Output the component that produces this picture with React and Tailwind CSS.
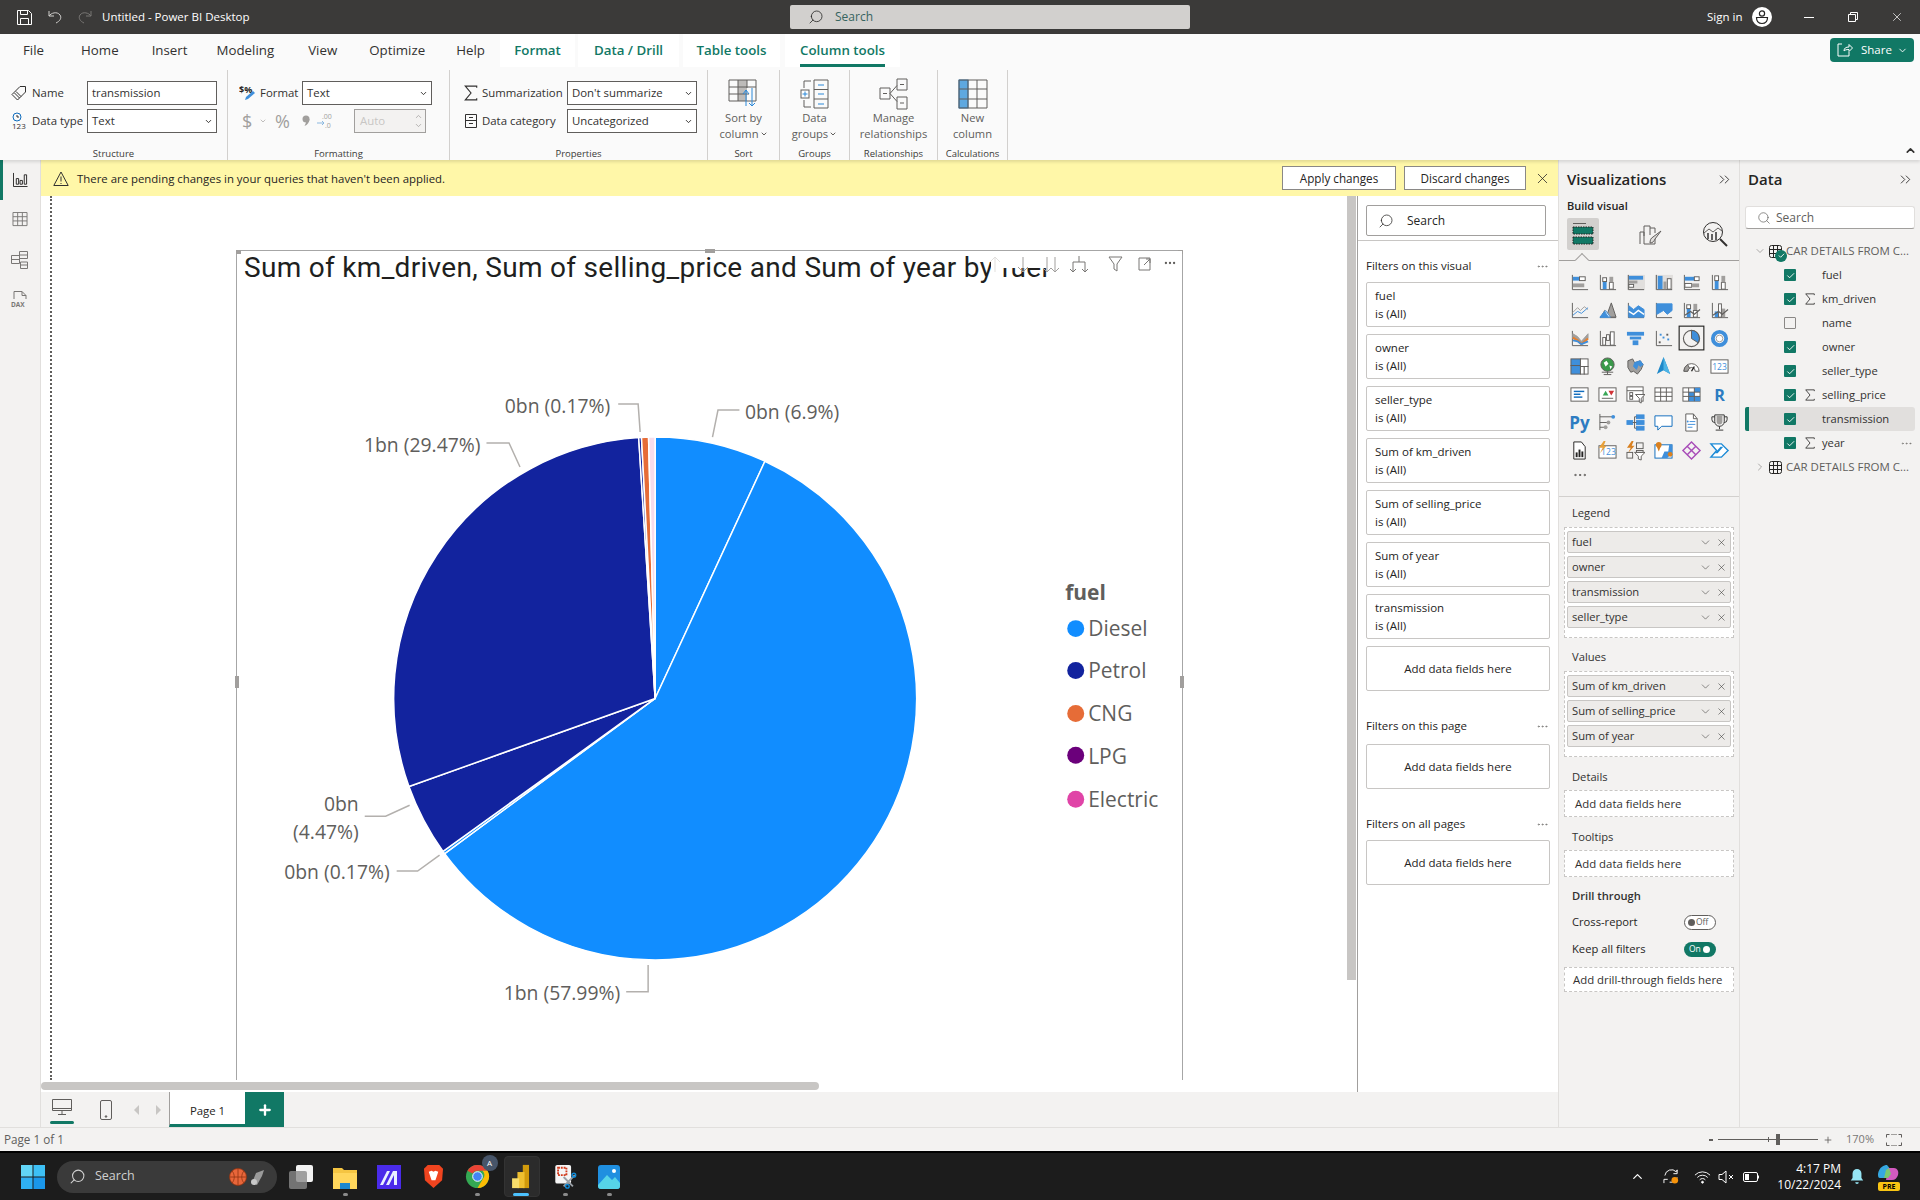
import React from "react";
import { Search, X, ChevronDown, ChevronRight, ChevronUp, ChevronsRight, Plus, MoreHorizontal } from "lucide-react";

const B = "#3f8fdb";
const G = "#a19f9d";
const D = "#605e5c";

const R = ({ x, y, w, h, f = "none", s }) => <rect x={x} y={y} width={w} height={h} fill={f} stroke={s} />;
const P = ({ d, f = "none", s = D, w = 1 }) => <path d={d} fill={f} stroke={s} strokeWidth={w} />;

const Axes = () => <P d="M2.5 2v15.5H19" />;

// visualization pane icons, row by row
const vizIcons = [
  <><Axes /><R x={3} y={4} w={7} h={4} f={B} /><R x={3} y={11} w={12} h={4} f={G} /><R x={10} y={4} w={6} h={4} f="#fff" s={D} /></>,
  <><Axes /><R x={5} y={9} w={4} h={8} f={B} /><R x={5} y={5} w={4} h={4} f="#fff" s={D} /><R x={12} y={10} w={4} h={7} f="#fff" s={D} /><R x={12} y={4} w={4} h={6} f={G} /></>,
  <><R x={1} y={2} w={19} h={16} f="#e1dfdd" /><Axes /><R x={3} y={3} w={15} h={4} f={B} /><R x={3} y={8} w={9} h={3} f={G} /><R x={3} y={12} w={5} h={3} f="#fff" s={D} /></>,
  <><R x={1} y={2} w={19} h={16} f="#e1dfdd" /><Axes /><R x={4} y={3} w={5} h={14} f={B} /><R x={10} y={9} w={3} h={8} f={G} /><R x={14} y={6} w={4} h={11} f="#fff" s={D} /></>,
  <><Axes /><R x={3} y={4} w={10} h={4} f={B} /><R x={13} y={4} w={5} h={4} f="#fff" s={D} /><R x={3} y={11} w={7} h={4} f="#fff" s={D} /><R x={10} y={11} w={8} h={4} f={G} /></>,
  <><Axes /><R x={5} y={8} w={4} h={9} f={B} /><R x={5} y={3} w={4} h={5} f="#fff" s={D} /><R x={12} y={10} w={4} h={7} f="#fff" s={D} /><R x={12} y={3} w={4} h={7} f={G} /></>,

  <><Axes /><P d="M3 12l5-5 3 3 4-4 4 3" s={G} /><P d="M3 15l5-4 4 2 7-6" s={B} /></>,
  <><P d="M2 17.5h17" /><P d="M3 17l4-7 3 3 4-11 5 15z" f={G} s={D} /><P d="M3 17l5-7 5 7z" f="#fff" s={B} /><P d="M2 17l5-6 4 6z" f={B} s={B} /></>,
  <><Axes /><P d="M3 5l5 4 5-4 6 4v8H3z" f={B} s={B} /><P d="M3 11l5 3 5-4 6 4" s="#fff" w={1.5} /></>,
  <><Axes /><P d="M3 3h16v7l-5 4-4-4-7 4z" f={B} s={B} /></>,
  <><Axes /><R x={5} y={8} w={4} h={9} f={B} /><R x={5} y={4} w={4} h={4} f="#fff" s={D} /><R x={12} y={3} w={4} h={7} f={G} /><R x={12} y={10} w={4} h={7} f="#fff" s={D} /><P d="M3 15l6-4 4 3 6-5" w={1.2} /></>,
  <><Axes /><R x={5} y={11} w={4} h={6} f={B} /><R x={12} y={8} w={4} h={9} f={G} /><R x={9} y={3} w={3} h={14} f="#fff" s={D} /><P d="M3 15l6-4 4 3 6-5" w={1.2} /></>,

  <><Axes /><P d="M3 5l5 3 4 5 7-8v5l-7 6-4-4-5-2z" f={G} s={G} /><P d="M3 9l5 3 4 4 7-6" s="#e97f2b" w={2.2} /><P d="M3 12l5 1 4 3 7-3" s={B} w={2} /></>,
  <><Axes /><R x={5} y={9} w={3} h={8} s={D} f="#fff" /><R x={9} y={6} w={3} h={6} s={D} f="#fff" /><R x={13} y={3} w={4} h={14} s={D} f="#fff" /></>,
  <><R x={1} y={3} w={18} h={4} f={B} /><R x={4} y={8} w={12} h={3} f={B} /><R x={7} y={12} w={6} h={5} f={B} /></>,
  <><Axes /><R x={5} y={13} w={2} h={2} f={D} /><R x={9} y={8} w={2} h={2} f={B} /><R x={13} y={5} w={2} h={2} f={D} /><R x={14} y={10} w={2} h={2} f={B} /><R x={6} y={5} w={2} h={2} f={B} /></>,
  <><rect x={-3} y={-3} width={26} height={25} fill="none" stroke="#252423" strokeWidth={1.2} /><circle cx={10} cy={10} r={8.5} fill="none" stroke={D} strokeWidth={1.2} /><P d="M10 10V1.5a8.5 8.5 0 0 1 7 13z" f={B} s={D} /></>,
  <><circle cx={10} cy={10} r={7} fill="none" stroke={B} strokeWidth={4} /><circle cx={10} cy={10} r={3.5} fill="#fff" stroke={G} /></>,

  <><R x={1} y={2} w={10} h={7} f={B} s={D} /><R x={1} y={9} w={10} h={9} f={B} s={D} /><R x={11} y={2} w={8} h={8} f="#fff" s={D} /><R x={11} y={10} w={4} h={8} f="#fff" s={D} /><R x={15} y={10} w={4} h={8} f="#fff" s={D} /></>,
  <><circle cx={10} cy={8} r={7} fill="#3a9a4a" stroke={D} /><P d="M6 6l3-2 2 3-3 3zM12 9l3 1-2 3z" f="#fff" s="none" /><P d="M4 16h12M10 15v3M6 18.5h8" /></>,
  <><P d="M2 4l5-2 2 4 6-2 3 4-2 5-4 5-4-3-3 1-3-5z" f={G} s={D} /><P d="M9 6l6-2 3 4-3 2-2-2-2 5-3-3z" f={B} s={B} /></>,
  <><P d="M10 0L3 18l7-4 7 4z" f="#1e88c9" s="none" /><P d="M10 0v14l7 4z" f="#4db4e6" s="none" /></>,
  <><P d="M2 15a8 8 0 0 1 16 0h-4a4 4 0 0 0-8 0z" f="#fff" s={D} /><P d="M2 15a8 8 0 0 1 4-7l2 4a4 4 0 0 0-2 3z" f={G} s={D} /><P d="M10 15l3-5" s="#252423" w={1.5} /></>,
  <><R x={1} y={3} w={18} h={14} f="#fff" s={D} /><text x={10} y={14} textAnchor="middle" fontSize="9" fontFamily="Open Sans" fill={B}>123</text></>,

  <><R x={1} y={3} w={18} h={14} f="#fff" s={D} /><R x={4} y={6} w={11} h={1.5} f="#0f6cbd" /><R x={4} y={9} w={7} h={1.5} f="#0f6cbd" /><R x={4} y={12} w={9} h={1.5} f="#0f6cbd" /></>,
  <><R x={1} y={3} w={18} h={14} f="#fff" s={D} /><P d="M5 11l3-5 3 5z" f="#3aa657" s="none" /><P d="M11 6h6l-3 5z" f="#d13438" s="none" /><P d="M4 14h12" /></>,
  <><R x={1} y={2} w={17} h={15} f="#fff" s={D} /><P d="M1 6h17" /><R x={4} y={8} w={3} h={3} s={D} /><R x={4} y={12} w={3} h={3} s={D} /><P d="M10 10h10l-4 4v5l-2-1v-4z" f="#fff" /></>,
  <><R x={1} y={3} w={18} h={14} f="#fff" s={D} /><P d="M1 7.5h18M1 12h18M7 3v14M13 3v14" /></>,
  <><R x={1} y={3} w={18} h={14} f="#fff" s={D} /><R x={7} y={7.5} w={6} h={4.5} f={B} /><R x={13} y={3} w={6} h={4.5} f={B} /><R x={7} y={12} w={6} h={5} f={B} /><R x={13} y={12} w={6} h={5} f={B} /><P d="M1 7.5h18M1 12h18M7 3v14M13 3v14" /></>,
  <text x={10} y={17} textAnchor="middle" fontSize="17" fontWeight="700" fontFamily="Open Sans" fill="#2d7cc1">R</text>,

  <text x={10} y={17} textAnchor="middle" fontSize="18" fontWeight="700" fontFamily="Open Sans" fill="#2d7cc1">Py</text>,
  <><P d="M2 1v17M2 4h13M2 10h8M2 15h5" /><circle cx={16} cy={4} r={2} fill={B} /><circle cx={11} cy={10} r={2} fill={G} /><circle cx={8} cy={15} r={2} fill={G} /></>,
  <><R x={1} y={8} w={6} h={4} f={B} s={B} /><R x={11} y={2} w={8} h={4} f={B} s={B} /><R x={11} y={8} w={8} h={4} f={B} s={B} /><R x={11} y={14} w={8} h={4} f={B} s={B} /><P d="M7 10h4M9 4v12M9 4h2M9 16h2" /></>,
  <P d="M1 3h18v11H8l-4 4v-4H1z" f="#fff" s="#0f6cbd" />,
  <><P d="M4 1h8l4 5v13H4z" f="#fff" /><P d="M12 1v5h4" /><circle cx={6} cy={9} r={1} fill={B} /><P d="M8 9h6M6 12h8M6 15h5" s={B} /></>,
  <><P d="M5 2h10v7a5 5 0 0 1-10 0zM5 4H2v3a3 3 0 0 0 3 3M15 4h3v3a3 3 0 0 1-3 3M10 14v3M6 18h8" s="#323130" /><P d="M7 3h6v6a3 3 0 0 1-6 0z" f={G} s="none" /></>,

  <><P d="M4 1h8l4 5v13H4z" f="#fff" s="#252423" /><R x={6} y={12} w={2} h={5} f="#252423" /><R x={9} y={9} w={2} h={8} f="#252423" /><R x={12} y={11} w={2} h={6} f="#252423" /></>,
  <><R x={1} y={5} w={18} h={13} f="#fff" s={D} /><text x={11} y={15} textAnchor="middle" fontSize="9" fontFamily="Open Sans" fill={B}>123</text><P d="M6 0L1 7h4l-3 6 7-8H6l2-5z" f="#e8a13a" s="none" /></>,
  <><P d="M6 0L1 7h4l-3 6 7-8H6l2-5z" f="#d9801f" s="none" /><R x={11} y={2} w={7} h={6} s={D} /><R x={1} y={12} w={6} h={6} s={D} /><R x={11} y={10} w={7} h={2} s={D} /><P d="M9 12h11l-4 4v4l-3-1v-3z" f="#fff" /></>,
  <><R x={1} y={4} w={18} h={14} f="#fff" s="#0f6cbd" /><P d="M8 18l3-7h4l1-7h3v9l-5 5z" f={B} s="none" /><circle cx={5} cy={4} r={3} fill="#d9801f" /><P d="M3 6l2 5 2-5z" f="#d9801f" s="none" /><circle cx={17} cy={14} r={2.5} fill="#d9801f" /></>,
  <P d="M10 1l9 9-9 9-9-9zM6 6l8 8M14 6l-8 8" s="#a84cb8" w={1.5} />,
  <><P d="M1 3h11l7 7-7 7H1l6-7z" f="#fff" s="#1c8ad6" w={1.5} /><P d="M5 13l6-7h3l-6 7z" f="#1c8ad6" s="none" /></>,
];

function Sigma({ className = "w-3 h-3" }) {
  return (
    <svg viewBox="0 0 14 14" className={className}>
      <path d="M12 2.5V1H2l5 6-5 6h10v-1.5" fill="none" stroke="#323130" strokeWidth="1" />
    </svg>
  );
}

function Select({ value, width }) {
  return (
    <div className={`flex items-center justify-between h-[24px] bg-white border border-[#605e5c] pl-[4px] pr-[3px] text-[11.4px] ${width}`}>
      <span>{value}</span>
      <ChevronDown size={9} strokeWidth={2.5} className="text-[#323130]" />
    </div>
  );
}

function Group({ width, label, children }) {
  return (
    <div className={`mt-[3px] h-[90px] border-r border-[#d2d0ce] flex flex-col ${width}`}>
      <div className="h-[77px]">{children}</div>
      <div className="h-[13px] leading-[13px] text-[9.5px] text-center text-[#3b3a39]">{label}</div>
    </div>
  );
}

function BigButton({ icon, lines, chevron }) {
  return (
    <div className="flex flex-col items-center pt-[8px] text-[11.2px] leading-[16px] text-[#605e5c]">
      <div className="h-[32px] flex items-start justify-center">{icon}</div>
      <div className="whitespace-nowrap">{lines[0]}</div>
      <div className="whitespace-nowrap flex items-center gap-[1px]">
        {lines[1]}
        {chevron && <ChevronDown size={8} strokeWidth={3} />}
      </div>
    </div>
  );
}

function TitleBar() {
  return (
    <div className="h-[34px] bg-[#3b3a39] flex items-center text-white text-[11.5px]">
      <svg viewBox="0 0 15 15" className="w-[15px] h-[15px] ml-[17px]" fill="none" stroke="#fff">
        <path d="M.5.5h11l3 3v11H.5zM3.5.5v4h7v-4M3.5 14.5v-6h8v6" />
      </svg>
      <svg viewBox="0 0 14 14" className="w-[14px] h-[14px] ml-[16px]" fill="none" stroke="#d2d0ce">
        <path d="M1 1v5h5M1 6c2-3 8-5 11-1 2 3 0 6-4 8" />
      </svg>
      <svg viewBox="0 0 14 14" className="w-[14px] h-[14px] ml-[16px]" fill="none" stroke="#797775">
        <path d="M13 1v5H8M13 6C11 3 5 1 2 5c-2 3 0 6 4 8" />
      </svg>
      <span className="ml-[10px] w-[688px] whitespace-nowrap">Untitled - Power BI Desktop</span>
      <div className="w-[400px] h-[24px] bg-[#d2d0ce] rounded-[2px] flex items-center pl-[18px] text-[#37645f] text-[12px]">
        <Search size={16} strokeWidth={1.2} className="text-[#252423] -scale-x-100" />
        <span className="ml-[11px]">Search</span>
      </div>
      <span className="ml-[517px]">Sign in</span>
      <div className="ml-[10px] w-[20px] h-[20px] rounded-full bg-white flex items-center justify-center">
        <svg viewBox="0 0 16 16" className="w-[16px] h-[16px]" fill="none" stroke="#252423" strokeWidth="1.2">
          <circle cx="8" cy="4.5" r="2.6" />
          <path d="M2.5 8.5h11c0 4-2.5 6-5.5 6s-5.500-2-5.500-6z" />
        </svg>
      </div>
      <div className="ml-[32px] w-[10px] h-[1px] bg-white" />
      <svg viewBox="0 0 10 10" className="ml-[34px] w-[10px] h-[10px]" fill="none" stroke="#fff">
        <path d="M.5 2.500h7v7h-7zM2.500 2.500v-2h7v7h-2" />
      </svg>
      <X size={14} strokeWidth={1.2} className="ml-[32px]" />
    </div>
  );
}

const menuItems = [
  ["File", "ml-[23px]"],
  ["Home", "ml-[37px]"],
  ["Insert", "ml-[33px]"],
  ["Modeling", "ml-[29px]"],
  ["View", "ml-[34px]"],
  ["Optimize", "ml-[32px]"],
  ["Help", "ml-[31px]"],
];

function Ribbon() {
  return (
    <div className="h-[126px] bg-[#fafafa] flex flex-col shadow-[0_2px_3px_rgba(0,0,0,0.12)] relative z-10 text-[#323130]">
      <div className="h-[33px] flex items-stretch text-[13.3px]">
        <div className="w-[500px] flex items-stretch whitespace-nowrap">
          {menuItems.map(([t, m]) => (
            <div key={t} className={`${m} flex items-center`}>{t}</div>
          ))}
        </div>
        <div className="w-[75px] bg-white flex items-center justify-center font-semibold text-[#117865]">Format</div>
        <div className="ml-[3px] w-[101px] bg-white flex items-center justify-center font-semibold text-[#117865]">Data / Drill</div>
        <div className="ml-[4px] w-[97px] bg-white flex items-center justify-center font-semibold text-[#117865]">Table tools</div>
        <div className="ml-[5px] w-[115px] bg-white flex items-center justify-center font-semibold text-[#117865] relative">
          Column tools
          <div className="absolute left-[15px] right-[15px] bottom-0 h-[3px] bg-[#117865]" />
        </div>
        <div className="ml-auto mr-[6px] mt-[4px] w-[84px] h-[24px] bg-[#117865] rounded-[4px] text-white flex items-center text-[11.5px] pl-[7px]">
          <svg viewBox="0 0 16 14" className="w-[16px] h-[14px]" fill="none" stroke="#fff">
            <path d="M5 1H1v12h11V9M7 8c0-3 2-4 5-4V1.500L15.500 5 12 8.500V6.500C9 6.500 8 7 7 8z" />
          </svg>
          <span className="ml-[8px]">Share</span>
          <ChevronDown size={11} className="ml-[5px]" />
        </div>
      </div>
      <div className="flex items-start flex-1 text-[11.4px]">
        <Group width="w-[228px]" label="Structure">
          <div className="pt-[11px] pl-[11px] flex flex-col gap-[4px]">
            <div className="flex items-center h-[24px]">
              <svg viewBox="0 0 16 16" className="w-[16px] h-[16px]" fill="none" stroke="#323130">
                <path d="M9 1.500h5.500V7l-8 8L1 9.500zM3.500 8l5 5M5 6.500l5 5" />
              </svg>
              <span className="ml-[5px] w-[55px]">Name</span>
              <div className="w-[130px] h-[24px] bg-white border border-[#605e5c] pl-[4px] leading-[22px]">transmission</div>
            </div>
            <div className="flex items-center h-[24px]">
              <svg viewBox="0 0 16 18" className="w-[16px] h-[18px] overflow-visible">
                <circle cx="6" cy="5" r="4" fill="none" stroke="#0f6cbd" />
                <path d="M6 3v2h2" fill="none" stroke="#323130" />
                <text x="1" y="16.500" fontSize="8" fontFamily="Open Sans" fill="#323130">123</text>
              </svg>
              <span className="ml-[5px] w-[55px] whitespace-nowrap">Data type</span>
              <Select value="Text" width="w-[130px]" />
            </div>
          </div>
        </Group>
        <Group width="w-[222px]" label="Formatting">
          <div className="pt-[11px] flex flex-col gap-[4px]">
            <div className="flex items-center h-[24px] pl-[11px]">
              <svg viewBox="0 0 18 18" className="w-[18px] h-[18px]">
                <text x="0" y="9" fontSize="9" fontWeight="700" fontFamily="Open Sans" fill="#252423">$%</text>
                <path d="M6 16l1-3 7-6 2 2-7 6z" fill="#3f8fdb" />
              </svg>
              <span className="ml-[3px] w-[42px]">Format</span>
              <Select value="Text" width="w-[130px]" />
            </div>
            <div className="flex items-center h-[24px] pl-[14px] text-[#a19f9d] relative">
              <span className="text-[18px] w-[14px]">$</span>
              <ChevronDown size={8} strokeWidth={2} className="ml-[3px]" />
              <span className="text-[18px] ml-[8px] w-[18px]">%</span>
              <svg viewBox="0 0 8 12" className="w-[8px] h-[12px] ml-[9px]">
                <circle cx="4" cy="4" r="3.500" fill="#a19f9d" />
                <path d="M7.500 4c0 3-2 6-5 7 1-2 2-4 1.500-6z" fill="#a19f9d" />
              </svg>
              <svg viewBox="0 0 18 18" className="w-[18px] h-[18px] ml-[6px]" fill="none" stroke="#a19f9d">
                <text x="6" y="7" fontSize="7" fontFamily="Open Sans" fill="#a19f9d" stroke="none">.00</text>
                <text x="9" y="16" fontSize="7" fontFamily="Open Sans" fill="#a19f9d" stroke="none">.0</text>
                <path d="M1 11h7M6 9l2 2-2 2" stroke="#8bb8e0" />
              </svg>
              <div className="ml-[20px] w-[72px] h-[24px] bg-[#f3f2f1] border border-[#a19f9d] pl-[5px] leading-[22px] flex items-center justify-between pr-[2px] text-[#c8c6c4]">
                <span>Auto</span>
                <div className="flex flex-col text-[#a19f9d]">
                  <ChevronUp size={9} />
                  <ChevronDown size={9} />
                </div>
              </div>
            </div>
          </div>
        </Group>
        <Group width="w-[258px]" label="Properties">
          <div className="pt-[11px] pl-[13px] flex flex-col gap-[4px]">
            <div className="flex items-center h-[24px]">
              <Sigma className="w-[16px] h-[16px]" />
              <span className="ml-[3px] w-[85px] whitespace-nowrap">Summarization</span>
              <Select value="Don't summarize" width="w-[130px]" />
            </div>
            <div className="flex items-center h-[24px]">
              <svg viewBox="0 0 16 16" className="w-[16px] h-[16px]" fill="none" stroke="#323130">
                <path d="M2.500 1.500h11v13h-11zM2.500 7.500h11M6 4.500h4M6 10.500h4" />
              </svg>
              <span className="ml-[3px] w-[85px] whitespace-nowrap">Data category</span>
              <Select value="Uncategorized" width="w-[130px]" />
            </div>
          </div>
        </Group>
        <Group width="w-[72px]" label="Sort">
          <BigButton
            lines={["Sort by", "column"]}
            chevron
            icon={
              <svg viewBox="0 0 32 32" className="w-[32px] h-[32px]" fill="none" stroke="#605e5c">
                <rect x="10" y="2" width="9" height="21" fill="#bdbbb9" stroke="none" />
                <path d="M1 2h27v21H1zM1 9h27M1 16h20M10 2v21M19 2v8" />
                <path d="M18 12v16M15 16l3-4 3 4M24 10v18M21 25l3 3 3-3" stroke="#2b88d8" />
              </svg>
            }
          />
        </Group>
        <Group width="w-[70px]" label="Groups">
          <BigButton
            lines={["Data", "groups"]}
            chevron
            icon={
              <svg viewBox="0 0 30 32" className="w-[30px] h-[32px]" fill="none" stroke="#605e5c">
                <path d="M11 3H4v7M4 22v7h7M14 2h14v28H14zM14 11.500h14M14 21h14" />
                <path d="M18 7h6M18 16h6M18 26h6" stroke="#2b88d8" />
                <rect x="1" y="12" width="8" height="8" fill="#fff" />
                <path d="M5 13.500v5M2.500 16h5" stroke="#2b88d8" />
              </svg>
            }
          />
        </Group>
        <Group width="w-[88px]" label="Relationships">
          <BigButton
            lines={["Manage", "relationships"]}
            icon={
              <svg viewBox="0 0 30 32" className="w-[30px] h-[32px]" fill="none" stroke="#605e5c">
                <path d="M1 10h10v11H1zM18 1h10v11H18zM18 19h10v12H18zM4 15.500h4M21 6.500h4M21 25h4M11 15.500l7-8M11 15.500l7 8" />
              </svg>
            }
          />
        </Group>
        <Group width="w-[70px]" label="Calculations">
          <BigButton
            lines={["New", "column"]}
            icon={
              <svg viewBox="0 0 30 32" className="w-[30px] h-[32px]" fill="none" stroke="#605e5c">
                <rect x="1" y="2" width="9" height="28" fill="#5ea8e0" stroke="#2b78b8" />
                <path d="M1 2h28v28H1zM1 11h28M1 21h28M10 2v28M19 2v28" />
              </svg>
            }
          />
        </Group>
      </div>
      <ChevronUp size={13} strokeWidth={3} className="absolute right-[3px] bottom-[3px] text-[#323130]" />
    </div>
  );
}

function LeftRail() {
  return (
    <div className="w-[41px] bg-[#f3f2f1] border-r border-[#e1dfdd] flex flex-col items-center shrink-0 relative">
      <div className="absolute left-0 top-0 w-[3px] h-[40px] bg-[#117865]" />
      <svg viewBox="0 0 16 16" className="w-[15px] h-[15px] mt-[12px]" fill="none" stroke="#252423">
        <path d="M.5 1v14.500h15M3.500 7h2.500v6H3.500zM7.500 9h2.500v4H7.500zM12 3h2.500v10H12z" />
      </svg>
      <svg viewBox="0 0 16 16" className="w-[16px] h-[15px] mt-[25px]" fill="none" stroke="#797775">
        <path d="M.5.5h15v14h-15zM.5 5h15M.5 9.500h15M5.500.5v14M10.500.5v14" />
      </svg>
      <svg viewBox="0 0 18 18" className="w-[18px] h-[18px] mt-[24px]" fill="none" stroke="#797775">
        <path d="M.5 4.500h8v8h-8zM.5 8.500h8M8.500.5h8v7h-8zM8.500 4h8M9.500 11h7v6.500h-7zM9.500 14h7" />
      </svg>
      <div className="relative w-[18px] h-[18px] mt-[22px]">
        <svg viewBox="0 0 18 18" className="w-[18px] h-[18px]" fill="none" stroke="#797775">
          <path d="M3 8V.5h8l4 4V8M11 .5v4h4" />
        </svg>
        <span className="absolute left-0 bottom-0 text-[6.500px] leading-[8px] font-bold text-[#797775]">DAX</span>
      </div>
    </div>
  );
}

// pie wedge between two fractions of a turn, clockwise from 12 o'clock
const CX = 655;
const CY = 698;
const RAD = 262;
const pt = (f) => {
  const a = f * 2 * Math.PI;
  return `${(CX + RAD * Math.sin(a)).toFixed(2)} ${(CY - RAD * Math.cos(a)).toFixed(2)}`;
};
const wedge = (a, b) => `M${CX} ${CY}L${pt(a)}A${RAD} ${RAD} 0 ${b - a > 0.5 ? 1 : 0} 1 ${pt(b)}Z`;

const slices = [
  [0, 0.069, "#118dff"],
  [0.069, 0.6489, "#118dff"],
  [0.6489, 0.6506, "#118dff"],
  [0.6506, 0.6953, "#12239e"],
  [0.6953, 0.99, "#12239e"],
  [0.99, 0.9917, "#12239e"],
  [0.9917, 0.996, "#e66c37"],
  [0.996, 1, "#f6dcec"],
];

const leaders = [
  "M712.500 436L718 409H739.500",
  "M618 403H638L640 431",
  "M486 442H508.600L519.600 466",
  "M364 816H385L409 805",
  "M396 871H417L439 855",
  "M626 992H648V965",
];

const labels = [
  [745, 418, "0bn (6.9%)", "start"],
  [610, 412, "0bn (0.17%)", "end"],
  [480, 451, "1bn (29.47%)", "end"],
  [358, 811, "0bn", "end"],
  [358, 839, "(4.47%)", "end"],
  [389, 879, "0bn (0.17%)", "end"],
  [620, 1000, "1bn (57.99%)", "end"],
];

const legend = [
  ["Diesel", "#118dff", 628, 7],
  ["Petrol", "#12239e", 670, 7],
  ["CNG", "#e66c37", 713, 8],
  ["LPG", "#6b007b", 755, 9],
  ["Electric", "#e044a7", 799, 8],
];

function Handle({ className }) {
  return <div className={`absolute bg-[#a19f9d] ${className}`} />;
}

function PieVisual() {
  return (
    <div className="ml-[195px] mt-[54px] w-[947px] h-[830px] border-x border-t border-[#a6a6a6] relative shrink-0">
      <Handle className="left-[-1px] top-[-1px] w-[5px] h-[4px]" />
      <Handle className="right-[-1px] top-[-1px] w-[5px] h-[4px]" />
      <Handle className="left-[468px] top-[-2px] w-[10px] h-[4px]" />
      <Handle className="left-[-2px] top-[425px] w-[4px] h-[12px]" />
      <Handle className="right-[-2px] top-[425px] w-[4px] h-[12px]" />
      <div className="h-[39px] pl-[7px] font-['Roboto'] text-[28px] tracking-[0.3px] leading-[33px] text-[#201f1e] whitespace-nowrap">
        Sum of km_driven, Sum of selling_price and Sum of year by fuel
      </div>
      <div className="absolute top-0 left-[754px] right-0 h-[17px] bg-white" />
      <svg viewBox="0 0 200 20" className="absolute top-[3px] left-[750px] w-[200px] h-[20px]" fill="none" stroke="#a19f9d">
        <path d="M8 18V3M3 8l5-5 5 5" stroke="#e1dfdd" />
        <path d="M36 3v15M31 13l5 5 5-5" />
        <path d="M60 3v15M56 14l4 4 4-4M68 3v15M64 14l4 4 4-4" />
        <path d="M92 2v6M86 18v-10h12v10M83 15l3 3 3-3M95 15l3 3 3-3" stroke="#797775" />
        <path d="M122 3h13l-5 7v7l-3-2v-5z" stroke="#797775" />
        <path d="M152 4h11v12h-11zM157 11l6-6M159 5h4v4" stroke="#797775" />
      </svg>
      <MoreHorizontal size={14} className="absolute top-[5px] left-[926px] text-[#605e5c]" />
      <svg viewBox="236 289 947 791" className="w-[945px] h-[790px]">
        {slices.map(([a, b, c], i) => (
          <path key={i} d={wedge(a, b)} fill={c} stroke="#fff" strokeWidth="1.5" strokeLinejoin="round" />
        ))}
        {leaders.map((d) => (
          <path key={d} d={d} fill="none" stroke="#b3b0ad" strokeWidth="1.5" />
        ))}
        {labels.map(([x, y, t, a], i) => (
          <text key={i} x={x} y={y} textAnchor={a} fontFamily="Open Sans" fontSize="19.400" fill="#605e5c">{t}</text>
        ))}
        <text x={1066} y={599} fontFamily="Open Sans" fontWeight="700" fontSize="21" fill="#605e5c">fuel</text>
        {legend.map(([t, c, y, dy]) => (
          <g key={t}>
            <circle cx={1076.500} cy={y} r={8.500} fill={c} />
            <text x={1089} y={y + dy} fontFamily="Open Sans" fontSize="21" fill="#605e5c">{t}</text>
          </g>
        ))}
      </svg>
    </div>
  );
}

function FilterCard({ name }) {
  return (
    <div className="w-[184px] h-[45px] bg-white border border-[#c8c6c4] rounded-[2px] pl-[8px] pt-[4px] leading-[18px] mb-[7px]">
      <div>{name}</div>
      <div>is (All)</div>
    </div>
  );
}

function AddFields({ className = "" }) {
  return (
    <div className={`w-[184px] h-[45px] bg-white border border-[#c8c6c4] rounded-[2px] flex items-center justify-center ${className}`}>
      Add data fields here
    </div>
  );
}

function FilterHeading({ children, className }) {
  return (
    <div className={`flex items-center justify-between w-[184px] h-[16px] ${className}`}>
      <span>{children}</span>
      <MoreHorizontal size={13} strokeWidth={1.5} className="text-[#797775] mr-[1px]" />
    </div>
  );
}

function FiltersPane() {
  return (
    <div className="w-[201px] shrink-0 bg-white border-l border-[#a19f9d] text-[11.5px] text-[#252423]">
      <div className="h-[45px] border-b border-[#c8c6c4] pl-[8px] pt-[9px]">
        <div className="w-[180px] h-[31px] border border-[#a19f9d] rounded-[2px] flex items-center pl-[11px]">
          <Search size={16} strokeWidth={1.2} className="text-[#323130] -scale-x-100" />
          <span className="ml-[13px] text-[12px]">Search</span>
        </div>
      </div>
      <div className="pl-[8px]">
        <FilterHeading className="mt-[17px] mb-[8px]">Filters on this visual</FilterHeading>
        {["fuel", "owner", "seller_type", "Sum of km_driven", "Sum of selling_price", "Sum of year", "transmission"].map((n) => (
          <FilterCard key={n} name={n} />
        ))}
        <AddFields className="mt-[2px]" />
        <FilterHeading className="mt-[27px] mb-[10px]">Filters on this page</FilterHeading>
        <AddFields />
        <FilterHeading className="mt-[27px] mb-[8px]">Filters on all pages</FilterHeading>
        <AddFields />
      </div>
    </div>
  );
}

function PageTabs() {
  return (
    <div className="h-[35px] bg-[#f3f2f1] flex items-stretch">
      <div className="w-[28px] ml-[7px] flex flex-col items-center pt-[7px] relative">
        <svg viewBox="0 0 20 16" className="w-[20px] h-[16px]" fill="none" stroke="#605e5c">
          <path d="M.5.5h19v11H.5z" fill="#f3f2f1" />
          <path d="M.5 9.500h19M10 12v3M6 15.500h8" />
        </svg>
        <div className="absolute bottom-[3px] left-[2px] w-[24px] h-[3px] rounded-full bg-[#117865]" />
      </div>
      <div className="w-[50px] ml-[8px] flex items-center">
        <svg viewBox="0 0 12 20" className="w-[12px] h-[20px] ml-[16px]" fill="none" stroke="#605e5c">
          <rect x=".5" y=".5" width="11" height="19" rx="1.500" />
          <circle cx="6" cy="16.500" r=".8" fill="#605e5c" />
        </svg>
      </div>
      <svg viewBox="0 0 6 10" className="w-[6px] h-[10px] self-center"><path d="M5 0v10L0 5z" fill="#c8c6c4" /></svg>
      <svg viewBox="0 0 6 10" className="w-[6px] h-[10px] self-center ml-[15px]"><path d="M1 0v10l5-5z" fill="#c8c6c4" /></svg>
      <div className="ml-[8px] w-[76px] bg-white border-l border-[#a19f9d] border-b-[3px] border-b-[#117865] flex items-center justify-center pt-[5px] text-[11.4px] text-[#252423]">Page 1</div>
      <div className="w-[39px] bg-[#117865] flex items-center justify-center text-white">
        <Plus size={16} strokeWidth={3.500} />
      </div>
    </div>
  );
}

function Chip({ name }) {
  return (
    <div className="h-[22px] bg-[#edebe9] border border-[#c8c6c4] rounded-[2px] flex items-center pl-[4px] pr-[3px] text-[11.2px] text-[#323130]">
      <span className="flex-1">{name}</span>
      <ChevronDown size={13} strokeWidth={1} className="text-[#323130]" />
      <X size={11} strokeWidth={1.2} className="ml-[4px] text-[#323130]" />
    </div>
  );
}

function Well({ height, chips, text = "Add data fields here", pl = "pl-[10px]" }) {
  return (
    <div className={`ml-[5px] w-[170px] bg-white border border-dashed border-[#c8c6c4] ${height} ${chips ? "pt-[3px] px-[2px] flex flex-col gap-[3px]" : `flex items-center ${pl}`}`}>
      {chips ? chips.map((c) => <Chip key={c} name={c} />) : <span className="text-[11.4px] whitespace-nowrap text-[#323130]">{text}</span>}
    </div>
  );
}

function WellLabel({ children, className }) {
  return <div className={`ml-[13px] leading-[16px] text-[11.2px] text-[#323130] ${className}`}>{children}</div>;
}

function VizPane() {
  return (
    <div className="w-[182px] shrink-0 bg-[#f3f2f1] border-l border-r border-[#e1dfdd] text-[#252423]">
      <div className="h-[38px] flex items-center justify-between pl-[8px] pr-[6px]">
        <span className="text-[15px] font-semibold">Visualizations</span>
        <ChevronsRight size={17} strokeWidth={1.200} />
      </div>
      <div className="pl-[8px] h-[16px] leading-[16px] text-[11px] font-semibold">Build visual</div>
      <div className="mt-[4px] flex items-center h-[32px] pl-[8px]">
        <div className="w-[32px] h-[32px] bg-[#d2d0ce] rounded-[2px] flex items-center justify-center">
          <svg viewBox="0 0 24 24" className="w-[24px] h-[24px]">
            <path d="M2 1.500h13" stroke="#605e5c" />
            <rect x="2" y="5" width="20" height="7" fill="#117865" stroke="#252423" strokeDasharray="1.500 1" />
            <rect x="2" y="15" width="20" height="7" fill="#117865" stroke="#252423" strokeDasharray="1.500 1" />
          </svg>
        </div>
        <svg viewBox="0 0 24 24" className="w-[24px] h-[24px] ml-[39px]" fill="none" stroke="#605e5c">
          <path d="M2 22V10h4v12h11v-7M6 14V4h6v9M12 6h5v5" />
          <path d="M12 21c3 0 4-2 5-4l6-8-8 6c-2 1-3 3-3 6z" fill="#e1dfdd" />
        </svg>
        <svg viewBox="0 0 26 26" className="w-[26px] h-[26px] ml-[40px]" fill="none" stroke="#323130">
          <circle cx="11" cy="11" r="9.500" />
          <path d="M18 18l7 7" strokeWidth="2" />
          <path d="M2 12l5-4 4 3 5-4 4 3" stroke="#605e5c" />
          <path d="M6 12v6M10 13v6M14 11v8" strokeWidth="1.500" />
        </svg>
      </div>
      <div className="mt-[10px] h-[1px] bg-[#a19f9d] relative">
        <div className="absolute left-[18px] -top-[5px] w-[10px] h-[10px] rotate-45 bg-[#f3f2f1] border-l border-t border-[#a19f9d]" />
      </div>
      <div className="ml-[6px] mt-[7px] grid grid-cols-6 w-[168px] auto-rows-[28px]">
        {vizIcons.map((icon, i) => (
          <div key={i} className="flex items-center justify-center">
            <svg viewBox="0 0 20 20" className="w-[19px] h-[19px] overflow-visible">{icon}</svg>
          </div>
        ))}
      </div>
      <div className="h-[33px] border-b border-[#d2d0ce] pl-[13px] pt-[3px] text-[#605e5c]">
        <MoreHorizontal size={16} strokeWidth={1.500} />
      </div>
      <WellLabel className="h-[30px] pt-[8px]">Legend</WellLabel>
      <Well height="h-[111px]" chips={["fuel", "owner", "transmission", "seller_type"]} />
      <WellLabel className="h-[33px] pt-[11px]">Values</WellLabel>
      <Well height="h-[86px]" chips={["Sum of km_driven", "Sum of selling_price", "Sum of year"]} />
      <WellLabel className="h-[33px] pt-[12px]">Details</WellLabel>
      <Well height="h-[27px]" />
      <WellLabel className="h-[33px] pt-[12px]">Tooltips</WellLabel>
      <Well height="h-[27px]" />
      <WellLabel className="mt-[11px] font-semibold">Drill through</WellLabel>
      <div className="mt-[10px] h-[16px] flex items-center justify-between pl-[13px] pr-[23px] text-[11.2px]">
        <span>Cross-report</span>
        <div className="w-[32px] h-[15px] rounded-full border border-[#605e5c] bg-white flex items-center pl-[3px] gap-[1px] text-[8.500px] text-[#605e5c]">
          <div className="w-[7px] h-[7px] rounded-full bg-[#605e5c]" />
          <span>Off</span>
        </div>
      </div>
      <div className="mt-[11px] h-[16px] flex items-center justify-between pl-[13px] pr-[23px] text-[11.2px]">
        <span>Keep all filters</span>
        <div className="w-[32px] h-[15px] rounded-full bg-[#117865] flex items-center pl-[5px] gap-[2px] text-[8.500px] text-white">
          <span>On</span>
          <div className="w-[7px] h-[7px] rounded-full bg-white" />
        </div>
      </div>
      <Well height="mt-[10px] h-[25px]" text="Add drill-through fields here" pl="pl-[8px]" />
    </div>
  );
}

const fields = [
  ["fuel", true, false],
  ["km_driven", true, true],
  ["name", false, false],
  ["owner", true, false],
  ["seller_type", true, false],
  ["selling_price", true, true],
  ["transmission", true, false, true],
  ["year", true, true],
];

function TableGlyph() {
  return (
    <svg viewBox="0 0 13 13" className="w-[13px] h-[13px] shrink-0" fill="none" stroke="#252423">
      <rect x=".5" y=".5" width="12" height="12" rx="2" />
      <path d="M.5 4.500h12M.5 8.500h12M4.500.5v12M8.500.5v12" />
    </svg>
  );
}

function DataPane() {
  return (
    <div className="w-[180px] shrink-0 bg-[#f3f2f1] text-[#252423]">
      <div className="h-[38px] flex items-center justify-between pl-[8px] pr-[6px]">
        <span className="text-[15px] font-semibold">Data</span>
        <ChevronsRight size={17} strokeWidth={1.200} />
      </div>
      <div className="ml-[5px] mt-[8px] w-[170px] h-[23px] bg-white border border-[#e1dfdd] border-b-[#a19f9d] rounded-[3px] flex items-center pl-[11px] text-[#605e5c] text-[12px]">
        <Search size={14} strokeWidth={1.200} />
        <span className="ml-[5px]">Search</span>
      </div>
      <div className="mt-[10px] text-[11.2px]">
        <div className="h-[24px] flex items-center pl-[14px] text-[#605e5c]">
          <ChevronDown size={12} strokeWidth={1} className="text-[#605e5c]" />
          <div className="relative ml-[3px]">
            <TableGlyph />
            <div className="absolute left-[6px] top-[5px] w-[12px] h-[12px] rounded-full bg-[#117865] flex items-center justify-center">
              <svg viewBox="0 0 8 8" className="w-[7px] h-[7px]" fill="none" stroke="#fff"><path d="M1 4l2 2 4-4" /></svg>
            </div>
          </div>
          <span className="ml-[4px] whitespace-nowrap text-[11.5px]">CAR DETAILS FROM C...</span>
        </div>
        {fields.map(([name, on, sigma, active]) => (
          <div key={name} className={`h-[24px] ml-[5px] w-[170px] flex items-center relative rounded-[3px] ${active ? "bg-[#e1dfdd]" : ""}`}>
            {active && <div className="absolute left-0 top-0 h-full w-[4px] bg-[#117865] rounded-l-[2px]" />}
            <div className={`ml-[39px] w-[12px] h-[12px] rounded-[1px] flex items-center justify-center ${on ? "bg-[#117865]" : "bg-transparent border border-[#8a8886]"}`}>
              {on && <svg viewBox="0 0 10 10" className="w-[9px] h-[9px]" fill="none" stroke="#fff"><path d="M1.500 5l2.500 2.500 5-5" /></svg>}
            </div>
            <div className="w-[12px] ml-[8px]">{sigma && <Sigma className="w-[12px] h-[12px]" />}</div>
            <span className="ml-[6px] text-[#323130]">{name}</span>
            {name === "year" && <MoreHorizontal size={13} strokeWidth={1} className="absolute right-[2px] text-[#605e5c]" />}
          </div>
        ))}
        <div className="h-[24px] flex items-center pl-[14px] text-[#605e5c]">
          <ChevronRight size={12} strokeWidth={1} />
          <div className="ml-[3px]"><TableGlyph /></div>
          <span className="ml-[4px] whitespace-nowrap text-[11.5px]">CAR DETAILS FROM C...</span>
        </div>
      </div>
    </div>
  );
}

function Center() {
  return (
    <div className="w-[1517px] shrink-0 flex flex-col">
      <div className="h-[36px] bg-[#fff7a8] flex items-center text-[11.4px] text-[#252423] shrink-0">
        <svg viewBox="0 0 16 15" className="w-[16px] h-[15px] ml-[12px]" fill="none" stroke="#323130">
          <path d="M8 1L.8 14.500h14.400zM8 5.500v5M8 12v1" />
        </svg>
        <span className="ml-[8px] pt-[1px]">There are pending changes in your queries that haven't been applied.</span>
        <div className="ml-auto w-[114px] h-[24px] pt-[1px] bg-white border border-[#8a8886] flex items-center justify-center text-[11.7px]">Apply changes</div>
        <div className="ml-[8px] w-[122px] h-[24px] pt-[1px] bg-white border border-[#8a8886] flex items-center justify-center text-[11.7px]">Discard changes</div>
        <X size={17} strokeWidth={1.100} className="ml-[8px] mr-[7px]" />
      </div>
      <div className="flex-1 flex min-h-0">
        <div className="flex-1 bg-white relative flex overflow-hidden">
          <div className="absolute left-[9px] top-0 bottom-[12px] border-l-2 border-dotted border-[#605e5c]" />
          <PieVisual />
          <div className="absolute right-[1px] top-0 w-[9px] h-[784px] bg-[#c8c6c4]" />
          <div className="absolute left-0 bottom-[2px] w-[778px] h-[8px] rounded-full bg-[#c8c6c4]" />
        </div>
        <FiltersPane />
      </div>
      <PageTabs />
    </div>
  );
}

function StatusBar() {
  return (
    <div className="h-[24px] bg-[#f3f2f1] border-t border-[#e1dfdd] flex items-center text-[11.7px] text-[#605e5c]">
      <span className="ml-[4px] pt-[1px]">Page 1 of 1</span>
      <div className="ml-auto flex items-center pr-[18px]">
        <div className="w-[4px] h-[2px] bg-[#605e5c]" />
        <div className="ml-[5px] w-[100px] h-[1px] bg-[#605e5c] relative">
          <div className="absolute left-[50px] -top-[2px] w-[1px] h-[5px] bg-[#605e5c]" />
          <div className="absolute left-[58px] -top-[5px] w-[4px] h-[11px] bg-[#605e5c]" />
        </div>
        <Plus size={10} className="ml-[5px] text-[#605e5c]" />
        <span className="ml-[13px] text-[11px] text-[#797775]">170%</span>
        <svg viewBox="0 0 16 12" className="ml-[12px] w-[16px] h-[12px]" fill="none" stroke="#605e5c">
          <path d="M.5 3.500v-3h3M12.500.5h3v3M15.500 8.500v3h-3M3.500 11.500h-3v-3" />
          <path d="M5 .5h6M5 11.500h6" stroke="#a19f9d" />
        </svg>
      </div>
    </div>
  );
}

function TaskCell({ children, dot, active }) {
  return (
    <div className="w-[44px] h-[41px] flex items-center justify-center relative rounded-[4px]">
      {active && <div className="absolute left-[5px] right-[3px] top-0 bottom-0 bg-[#2b2b2b] border border-[#333] rounded-[4px]" />}
      <div className="relative flex items-center justify-center">{children}</div>
      {dot && <div className={`absolute bottom-[1px] h-[3px] rounded-full ${active ? "w-[16px] bg-[#4cc2ff]" : "w-[5px] bg-[#8a8a8a]"}`} />}
    </div>
  );
}

function Taskbar() {
  return (
    <div className="h-[49px] bg-[#1c1c1c] border-t-2 border-black flex items-center text-white">
      <svg viewBox="0 0 24 24" className="ml-[21px] w-[24px] h-[24px]">
        <rect x="0" y="0" width="11.500" height="11.500" fill="#62d6f7" />
        <rect x="12.500" y="0" width="11.500" height="11.500" fill="#3dc0f5" />
        <rect x="0" y="12.500" width="11.500" height="11.500" fill="#2fb0f3" />
        <rect x="12.500" y="12.500" width="11.500" height="11.500" fill="#1a97ea" />
      </svg>
      <div className="ml-[12px] w-[220px] h-[32px] rounded-full bg-[#3a3a3a] flex items-center pl-[12px] text-[12.500px] text-[#d0d0d0] relative">
        <Search size={17} strokeWidth={1.500} className="-scale-x-100" />
        <span className="ml-[9px] flex-1">Search</span>
        <svg viewBox="0 0 18 18" className="w-[18px] h-[18px]" fill="none" stroke="#8f3412" strokeWidth=".8">
          <circle cx="9" cy="9" r="8.500" fill="#e8663a" />
          <path d="M9 .5v17M.5 9h17M3 3c3 3 3 9 0 12M15 3c-3 3-3 9 0 12" />
        </svg>
        <svg viewBox="0 0 18 18" className="w-[18px] h-[18px] mr-[10px] ml-[2px]">
          <path d="M3 15l4-10 8-3-2 6-5 9z" fill="#9a9a9a" />
          <circle cx="5" cy="14" r="3" fill="#c8c8c8" />
        </svg>
      </div>
      <div className="ml-[2px] flex items-center">
        <TaskCell>
          <div className="w-[24px] h-[24px] relative">
            <div className="absolute right-0 top-0 w-[17px] h-[17px] bg-[#f2f2f2] rounded-[2px]" />
            <div className="absolute left-0 bottom-0 w-[18px] h-[18px] bg-[#8a8a8a]/80 rounded-[2px]" />
          </div>
        </TaskCell>
        <TaskCell dot>
          <svg viewBox="0 0 24 24" className="w-[24px] h-[24px]">
            <path d="M0 3h9l2 2h13v19H0z" fill="#f5c542" />
            <path d="M0 8h24v16H0z" fill="#ffd65c" />
            <rect x="7" y="18" width="10" height="6" fill="#1b88d0" />
          </svg>
        </TaskCell>
        <TaskCell>
          <svg viewBox="0 0 24 24" className="w-[24px] h-[24px]">
            <rect width="24" height="24" fill="#4a2bea" />
            <path d="M3 20l7-14h3l-7 14zM9 20l7-14h4v14h-3V10l-5 10z" fill="#e8f0ff" />
          </svg>
        </TaskCell>
        <TaskCell>
          <svg viewBox="0 0 22 26" className="w-[21px] h-[25px]">
            <path d="M5 1h12l4 4-1 12-9 8-9-8L1 5z" fill="#f0441f" />
            <path d="M6 8l3-1 2 1 2-1 3 1-2 6-1 3h-4l-1-3z" fill="#fff" />
          </svg>
        </TaskCell>
        <TaskCell dot>
          <svg viewBox="0 0 26 26" className="w-[25px] h-[25px]">
            <circle cx="13" cy="13" r="12" fill="#34a853" />
            <path d="M13 1a12 12 0 0 1 10.400 6H13a6 6 0 0 0-5.200 3L2.600 7A12 12 0 0 1 13 1z" fill="#ea4335" />
            <path d="M23.400 7A12 12 0 0 1 13 25l5.200-9a6 6 0 0 0 0-9z" fill="#fbbc04" />
            <circle cx="13" cy="13" r="5" fill="#4285f4" stroke="#fff" />
          </svg>
          <div className="absolute -right-[8px] -top-[9px] w-[16px] h-[16px] rounded-full bg-[#475569] text-[8px] flex items-center justify-center text-white">A</div>
        </TaskCell>
        <TaskCell dot active>
          <svg viewBox="0 0 20 28" className="w-[18px] h-[25px]">
            <path d="M12 1h7v26h-7z" fill="#d19a0b" />
            <path d="M6 9h8v18H6z" fill="#efc030" />
            <path d="M0 16h8v11H0z" fill="#f7dd6b" />
          </svg>
        </TaskCell>
        <TaskCell dot>
          <svg viewBox="0 0 24 28" className="w-[23px] h-[26px]">
            <rect x="1" y="1" width="17" height="20" rx="2" fill="#f5f5f5" />
            <path d="M4 4h9v8H4z" fill="none" stroke="#d13a1c" strokeWidth="2" strokeDasharray="2 1" />
            <path d="M10 14l10 10M22 12l-12 12" stroke="#9aa0a6" strokeWidth="2" />
            <circle cx="21" cy="12" r="2" fill="none" stroke="#0f8ad8" strokeWidth="1.500" />
            <circle cx="14" cy="24" r="2" fill="none" stroke="#0f8ad8" strokeWidth="1.500" />
          </svg>
        </TaskCell>
        <TaskCell dot>
          <svg viewBox="0 0 22 24" className="w-[22px] h-[24px]">
            <rect width="22" height="24" rx="3" fill="#1f8fe0" />
            <path d="M0 20l9-10 5 5 3-3 5 6v3a3 3 0 0 1-3 3H3a3 3 0 0 1-3-3z" fill="#56d4e8" />
            <circle cx="16" cy="6" r="2" fill="#fff" />
          </svg>
        </TaskCell>
      </div>
      <div className="ml-auto flex items-center pr-[15px]">
        <ChevronUp size={15} strokeWidth={2} />
        <svg viewBox="0 0 18 18" className="ml-[18px] w-[17px] h-[17px]" fill="none" stroke="#fff">
          <path d="M2 8a7 7 0 0 1 12-4l1-2v4h-4M15 10a7 7 0 0 1-8 5M1 16v-4h4" />
          <circle cx="12.500" cy="13" r="3.500" fill="#f7930a" stroke="none" />
        </svg>
        <svg viewBox="0 0 18 14" className="ml-[14px] w-[17px] h-[14px]" fill="none" stroke="#fff">
          <path d="M1 5a11 11 0 0 1 16 0M3.500 7.500a7.500 7.500 0 0 1 11 0M6 10a4 4 0 0 1 6 0" />
          <circle cx="9" cy="12.500" r="1" fill="#fff" />
        </svg>
        <svg viewBox="0 0 16 14" className="ml-[7px] w-[16px] h-[14px]" fill="none" stroke="#fff">
          <path d="M1 4.500h3L8 1v12L4 9.500H1zM11 5l4 4M15 5l-4 4" />
        </svg>
        <svg viewBox="0 0 17 10" className="ml-[9px] w-[17px] h-[10px]" fill="none" stroke="#fff">
          <rect x=".5" y=".5" width="14" height="9" rx="1.500" />
          <rect x="2" y="2" width="4" height="6" fill="#fff" stroke="none" />
          <path d="M15.500 3.500v3" />
        </svg>
        <div className="ml-[11px] w-[70px] text-right text-[12px] leading-[16px] whitespace-nowrap">
          <div>4:17 PM</div>
          <div>10/22/2024</div>
        </div>
        <svg viewBox="0 0 16 18" className="ml-[8px] w-[16px] h-[16px]">
          <path d="M8 0a5 5 0 0 1 5 5v5l2 3H1l2-3V5a5 5 0 0 1 5-5zM6 15h4a2 2 0 0 1-4 0z" fill="#96e6f5" />
        </svg>
        <div className="ml-[11px] w-[24px] h-[24px] relative mr-[5px]">
          <svg viewBox="0 0 24 18" className="w-[24px] h-[18px]">
            <path d="M2 9C3 2 8 0 11 0l4 5-5 8H4C2 13 2 11 2 9z" fill="#35a8e0" />
            <path d="M12 3h6c3 0 5 3 4 7-1 3-3 5-6 5h-6z" fill="#d35ac0" />
            <path d="M10 5l3-2 2 6-3 4H8z" fill="#7bc96f" />
          </svg>
          <div className="absolute -bottom-[2px] left-[2px] w-[22px] h-[9px] rounded-[2px] bg-[#f9c513] text-black text-[7px] leading-[9px] font-bold text-center">PRE</div>
        </div>
      </div>
    </div>
  );
}

export default function App() {
  return (
    <div className="w-[1920px] h-[1200px] overflow-hidden flex flex-col font-['Open_Sans',sans-serif]">
      <TitleBar />
      <Ribbon />
      <div className="flex h-[967px]">
        <LeftRail />
        <Center />
        <VizPane />
        <DataPane />
      </div>
      <StatusBar />
      <Taskbar />
    </div>
  );
}
